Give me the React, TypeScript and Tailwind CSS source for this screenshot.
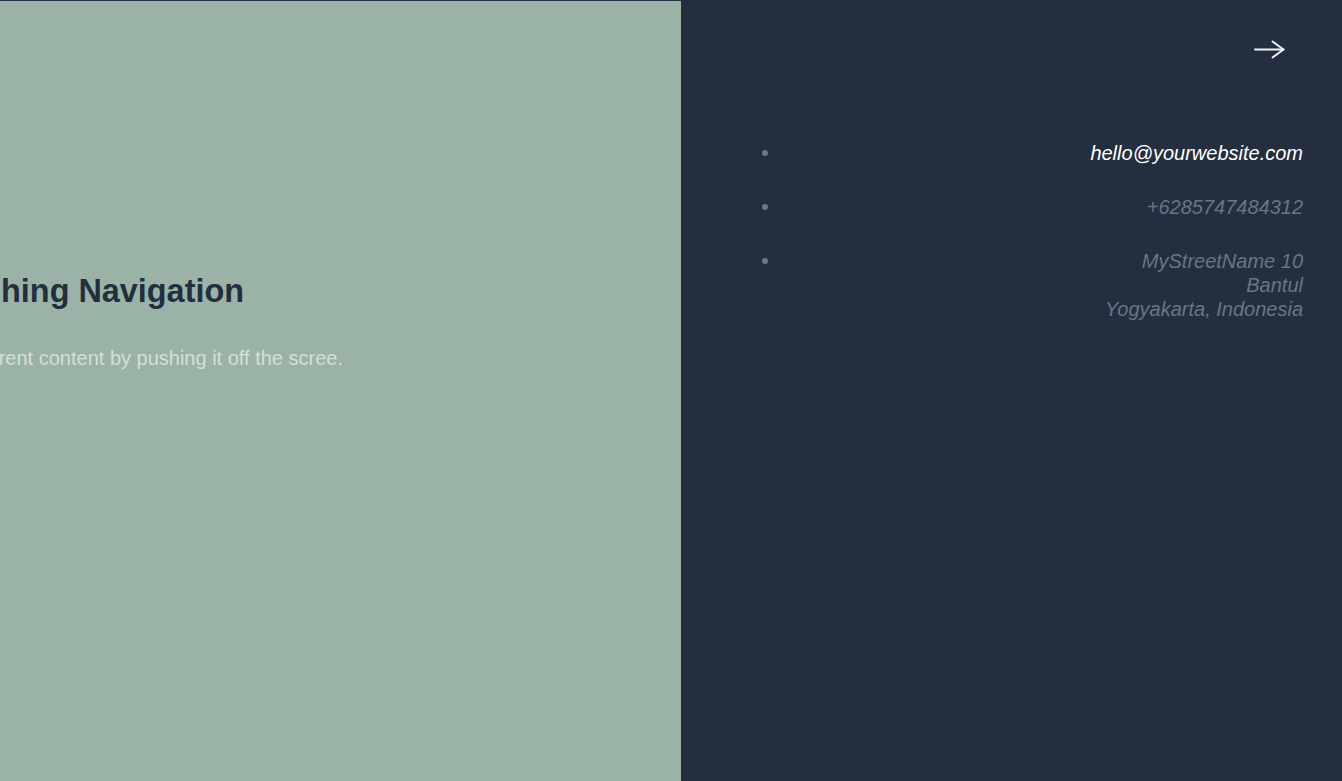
import React from "react";

const items: string[][] = [
  ["hello@yourwebsite.com"],
  ["+6285747484312"],
  ["MyStreetName 10", "Bantul", "Yogyakarta, Indonesia"],
];

export default function App() {
  return (
    <div
      className="flex h-[781px] w-full overflow-hidden bg-[#232e3f]"
      style={{ fontFamily: '"Liberation Sans", Arial, sans-serif' }}
    >
      <main className="flex w-[681px] shrink-0 flex-col overflow-hidden border-t border-[#232e3f] bg-[#9bb3a6] pt-[274px]">
        <div className="flex w-[244px] justify-end">
          <h1 className="whitespace-nowrap text-[32.4px] font-bold leading-[32px] text-[#232e3f]">
            Pushing Navigation
          </h1>
        </div>
        <div className="mt-[41px] flex w-[343px] justify-end">
          <p className="whitespace-nowrap text-[20px] leading-[20px] text-[#d4dfd9]">
            This navigation moves the current content by pushing it off the scree.
          </p>
        </div>
      </main>
      <nav className="flex flex-1 flex-col">
        <div className="flex justify-end pr-[57px] pt-[40px]">
          <svg width="31" height="19" viewBox="0 0 31 19" fill="none" stroke="#f3f4f6" strokeWidth="2" strokeLinecap="round" strokeLinejoin="round">
            <line x1="1" y1="9.5" x2="29.5" y2="9.5" />
            <polyline points="18.5,1.5 29.5,9.5 18.5,17.5" />
          </svg>
        </div>
        <ul className="mt-[82px] flex flex-col gap-[30px] pl-[81px] pr-[39px]">
          {items.map((lines, i) => (
            <li key={i} className="flex justify-between">
              <span className="mt-[9px] h-[6px] w-[6px] rounded-full bg-[#6f7888]" />
              <span
                className={
                  "text-right text-[20px] italic leading-[24px] " +
                  (i === 0 ? "text-white" : "text-[#6b7485]")
                }
              >
                {lines.map((l, j) => (
                  <span key={j} className="block">
                    {l}
                  </span>
                ))}
              </span>
            </li>
          ))}
        </ul>
      </nav>
    </div>
  );
}
